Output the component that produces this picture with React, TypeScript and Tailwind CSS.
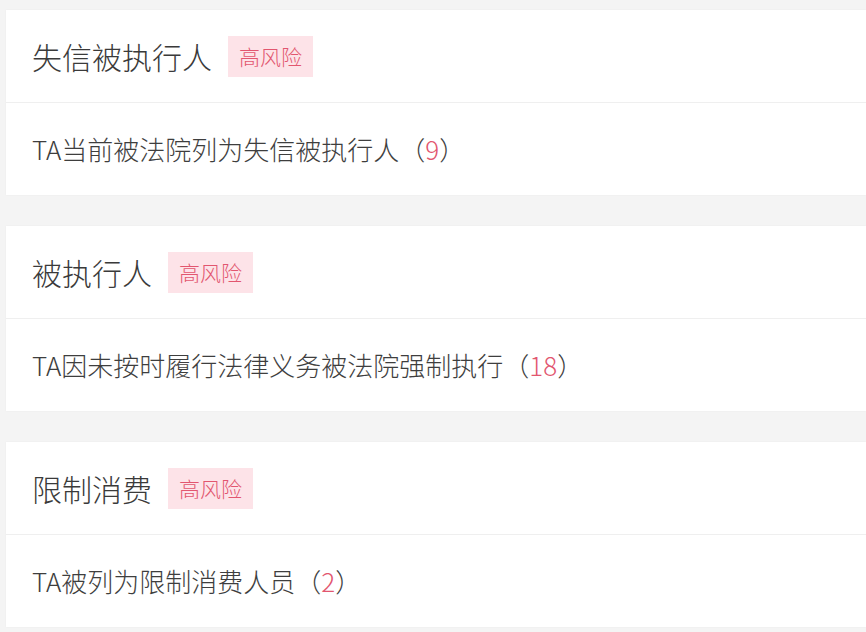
const risks = [
  { title: "失信被执行人", desc: "TA当前被法院列为失信被执行人", count: 9 },
  { title: "被执行人", desc: "TA因未按时履行法律义务被法院强制执行", count: 18 },
  { title: "限制消费", desc: "TA被列为限制消费人员", count: 2 },
];

function RiskCard({ title, desc, count }: { title: string; desc: string; count: number }) {
  return (
    <div className="bg-white ml-[6px] shadow-[0_0_2px_rgba(0,0,0,0.04)]">
      <div className="h-[92px] flex items-center pl-[26px]">
        <span className="text-[30px] leading-none font-light text-[#3a3a3a]">{title}</span>
        <span className="ml-[16px] h-[41px] px-[11px] flex items-center bg-[#fde3e8] text-[#e2566f] text-[21px] leading-none font-light">
          高风险
        </span>
      </div>
      <div className="h-px bg-[#efefef]" />
      <div className="h-[92px] flex items-center pl-[26px]">
        <span className="text-[26px] leading-none font-light text-[#3e3e3e]">
          {desc}（<span className="text-[#e2566f]">{count}</span>）
        </span>
      </div>
    </div>
  );
}

export default function App() {
  return (
    <div
      className="w-[866px] h-[632px] bg-[#f4f4f4] pt-[10px] flex flex-col gap-[31px] overflow-hidden"
      style={{ fontFamily: '"Noto Sans CJK SC", "Noto Sans", sans-serif' }}
    >
      {risks.map((r) => (
        <RiskCard key={r.title} {...r} />
      ))}
    </div>
  );
}
